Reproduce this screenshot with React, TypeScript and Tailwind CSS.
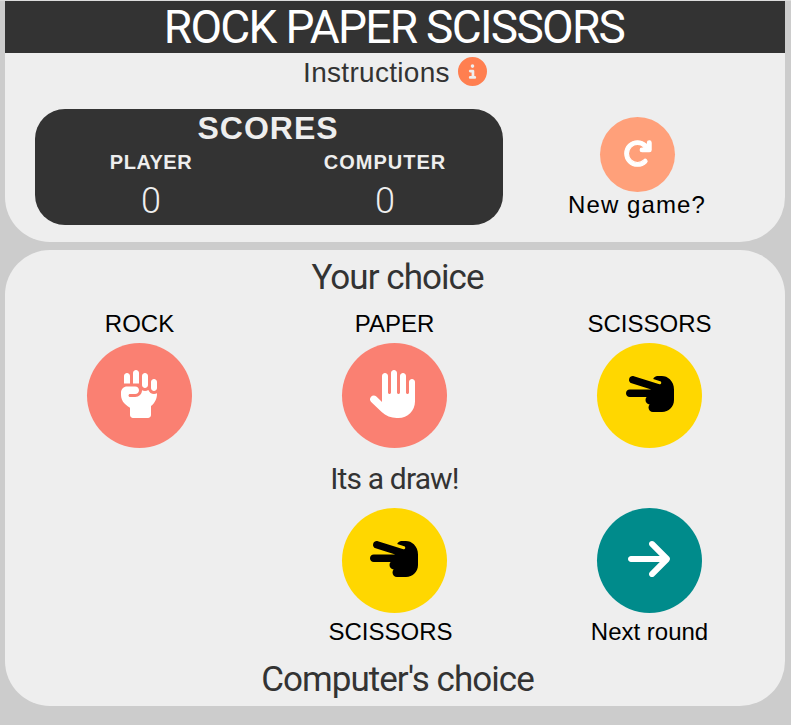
import type { ReactNode } from "react";
import { FaArrowRight, FaArrowRotateRight, FaCircleInfo, FaHandFist, FaHand, FaHandScissors } from "react-icons/fa6";

function Choice({ tone, children }: { tone: string; children: ReactNode }) {
  return (
    <button className={`flex size-[105px] items-center justify-center rounded-full text-[48px] ${tone}`}>
      {children}
    </button>
  );
}

function Score({ label, value, spacing }: { label: string; value: number; spacing: string }) {
  return (
    <div className="flex w-[234px] flex-col items-center pr-[2px]">
      <h3 className={`h-6 text-[20px] leading-6 font-bold ${spacing}`}>{label}</h3>
      <span className="mt-[6px] h-[42px] font-['Roboto',sans-serif] text-[36px] leading-[42px] font-light">{value}</span>
    </div>
  );
}

export default function App() {
  return (
    <div className="flex h-[725px] flex-col gap-2 border-t border-[#dddddd] bg-[#cccccc] pr-[6px] pl-[5px] font-['Liberation_Sans',Arial,sans-serif] text-black">
      <header className="h-[241px] rounded-b-[45px] bg-[#eeeeee]">
        <h1 className="h-[52px] bg-[#333333] pr-[2px] text-center font-['Roboto',sans-serif] text-[46px] leading-[53px] tracking-[-1.7px] text-white">
          ROCK PAPER SCISSORS
        </h1>
        <div className="flex h-[56px] justify-center gap-2 pt-[3px] text-[28px] leading-[33px] text-[#333333]">
          <span className="tracking-[0.3px]">Instructions</span>
          <FaCircleInfo className="mt-px size-[29px] text-[coral]" />
        </div>
        <div className="flex">
          <section className="ml-[30px] h-[116px] w-[468px] rounded-[30px] bg-[#333333] text-[#eeeeee]">
            <h2 className="h-[41px] pr-[2px] text-center text-[32px] leading-[38px] font-bold tracking-[1px]">SCORES</h2>
            <div className="flex">
              <Score label="PLAYER" value={0} spacing="tracking-[0.5px]" />
              <Score label="COMPUTER" value={0} spacing="tracking-[1px]" />
            </div>
          </section>
          <section className="ml-[34px] flex w-[200px] flex-col items-center pt-2">
            <button className="flex size-[75px] items-center justify-center rounded-full bg-[lightsalmon] pb-[3px] text-[29px] text-white">
              <FaArrowRotateRight className="stroke-current stroke-[22px]" />
            </button>
            <span className="text-[24px] leading-[26px] tracking-[1.1px]">New game?</span>
          </section>
        </div>
      </header>
      <main className="h-[456px] rounded-[45px] bg-[#eeeeee] pr-2 pl-[7px]">
        <h2 className="h-[60px] pl-[6px] text-center font-['Roboto',sans-serif] text-[35px] leading-[56px] tracking-[-0.95px] text-[#333333]">Your choice</h2>
        <div className="grid grid-cols-3 justify-items-center text-[24px]">
          <span className="h-[33px] leading-[28px]">ROCK</span>
          <span className="h-[33px] leading-[28px]">PAPER</span>
          <span className="h-[33px] leading-[28px]">SCISSORS</span>
          <Choice tone="bg-[salmon] pr-px pb-[3px] text-white"><FaHandFist /></Choice>
          <Choice tone="bg-[salmon] pr-px pb-[3px] text-white"><FaHand /></Choice>
          <Choice tone="bg-[gold] pb-[3px]"><FaHandScissors /></Choice>
        </div>
        <p className="h-[60px] text-center font-['Roboto',sans-serif] text-[30px] leading-[61px] tracking-[-0.85px] text-[#333333]">Its a draw!</p>
        <div className="grid grid-cols-3 justify-items-center text-[24px]">
          <div className="col-start-2"><Choice tone="bg-[gold] pr-px pb-[3px]"><FaHandScissors /></Choice></div>
          <Choice tone="bg-[darkcyan] pr-px pb-[3px] text-white"><FaArrowRight /></Choice>
          <span className="col-start-2 h-[44px] pr-2 leading-[38px]">SCISSORS</span>
          <span className="h-[44px] leading-[38px]">Next round</span>
        </div>
        <h2 className="pl-[6px] text-center font-['Roboto',sans-serif] text-[35px] leading-[46px] tracking-[-0.97px] text-[#333333]">Computer's choice</h2>
      </main>
    </div>
  );
}
